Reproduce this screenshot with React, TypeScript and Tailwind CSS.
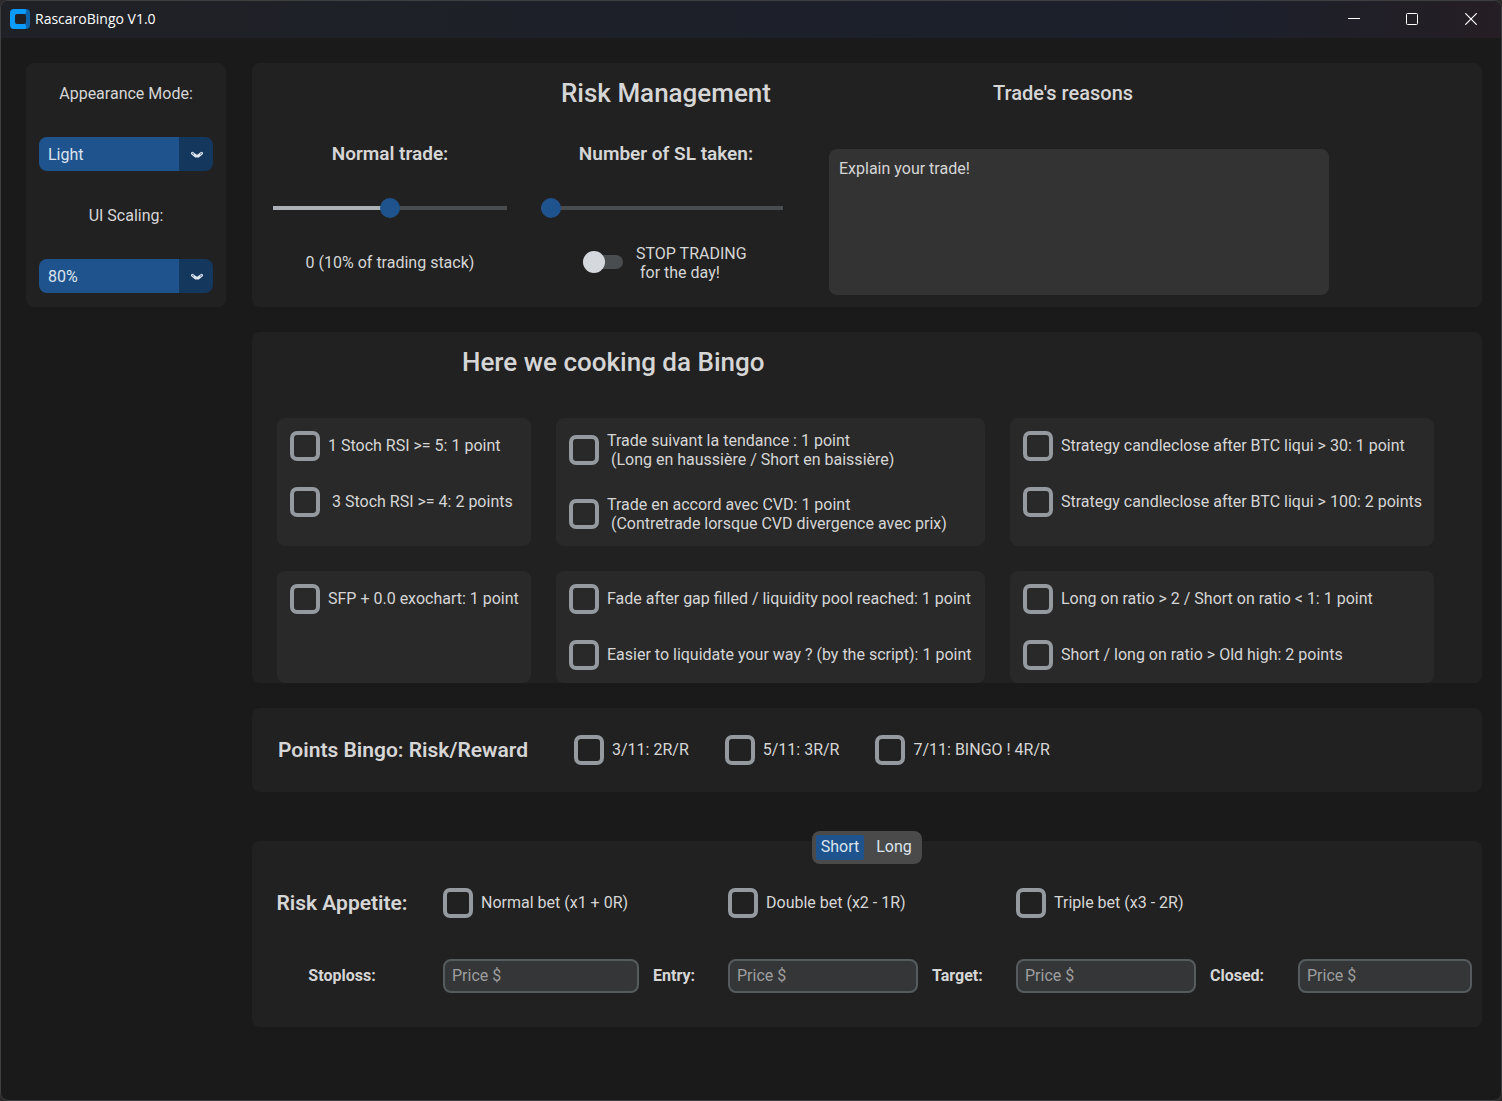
import { useState } from "react";

function Logo() {
  return (
    <svg width="20" height="20" viewBox="0 0 20 20" aria-hidden="true">
      <path d="M14 0h2a4 4 0 0 1 4 4v12a4 4 0 0 1-4 4h-2z" fill="#0a63ab" />
      <path
        d="M4 0H14.5a2 2 0 0 1 1.5 3.2L15 5H8v10h7l1 1.8a2 2 0 0 1-1.5 3.2H4a4 4 0 0 1-4-4V4a4 4 0 0 1 4-4z"
        fill="#0a9bff"
      />
      <rect x="5" y="5" width="11" height="10" rx="2" fill="#202126" />
    </svg>
  );
}

function TitleBar() {
  return (
    <header className="flex h-[37px] items-center justify-between bg-gradient-to-r from-[#202126] via-[#1b202c] via-80% to-[#251e24] pb-px">
      <div className="flex items-center gap-[5px] pl-[9px]">
        <Logo />
        <h1 className="font-['Open_Sans','Noto_Sans',sans-serif] text-[14px] leading-5 text-white">RascaroBingo V1.0</h1>
      </div>
      <div className="flex h-full text-white">
        <button type="button" aria-label="Minimize" className="grid w-[58px] place-items-center">
          <svg width="12" height="12" viewBox="0 0 12 12" fill="none" stroke="currentColor">
            <path d="M0 5.5h12" />
          </svg>
        </button>
        <button type="button" aria-label="Maximize" className="grid w-[58px] place-items-center">
          <svg width="12" height="12" viewBox="0 0 12 12" fill="none" stroke="currentColor">
            <rect x="0.5" y="0.5" width="11" height="11" rx="1" />
          </svg>
        </button>
        <button type="button" aria-label="Close" className="grid w-[60px] place-items-center">
          <svg width="12" height="12" viewBox="0 0 12 12" fill="none" stroke="currentColor" strokeWidth="1.2">
            <path d="M0.3 0.3l11.4 11.4M11.7 0.3L0.3 11.7" />
          </svg>
        </button>
      </div>
    </header>
  );
}

function OptionMenu({ id, label, options }: { id: string; label: string; options: string[] }) {
  return (
    <div>
      <label htmlFor={id} className="flex h-[60px] items-center justify-center pt-0.5">
        {label}
      </label>
      <div className="relative my-3.5 h-[34px]">
        <select
          id={id}
          className="h-full w-full appearance-none rounded-lg bg-linear-to-r from-[#1f538d] from-[calc(100%-34px)] to-[#14375e] to-[calc(100%-34px)] pt-0.5 pl-[9px] text-[#dce4ee]"
        >
          {options.map((o) => (
            <option key={o}>{o}</option>
          ))}
        </select>
        <svg
          className="pointer-events-none absolute top-[14px] right-[10px]"
          width="12"
          height="8"
          viewBox="0 0 12 8"
          fill="none"
          aria-hidden="true"
        >
          <path d="M1.5 2.3L4.8 5h2.4L10.5 2.3" stroke="#dce4ee" strokeWidth="3" strokeLinecap="round" strokeLinejoin="round" />
          <path d="M1.6 2.4l1 .7M10.4 2.4l-1 .7" stroke="#14375e" strokeWidth="0.8" strokeLinecap="round" />
        </svg>
      </div>
    </div>
  );
}

function Slider({ label, initial }: { label: string; initial: number }) {
  const [value, setValue] = useState(initial);
  return (
    <input
      type="range"
      aria-label={label}
      min={0}
      max={100}
      value={value}
      onChange={(e) => setValue(Number(e.target.value))}
      style={{ backgroundSize: `${value}% 4px, 100% 4px` }}
      className="block h-5 w-full appearance-none bg-[linear-gradient(#aab0b5,#aab0b5),linear-gradient(#4a4d50,#4a4d50)] bg-left bg-no-repeat [&::-webkit-slider-thumb]:size-5 [&::-webkit-slider-thumb]:appearance-none [&::-webkit-slider-thumb]:rounded-full [&::-webkit-slider-thumb]:bg-[#1f538d]"
    />
  );
}

function Check({ text }: { text: string }) {
  return (
    <label className="flex items-center gap-2 whitespace-pre leading-[19px]">
      <input
        type="checkbox"
        className="size-[30px] shrink-0 appearance-none rounded-[7px] border-4 border-[#949a9f] checked:border-[#1f538d] checked:bg-[#1f538d]"
      />
      <span className={text.includes("\n") ? "" : "pb-px"}>{text}</span>
    </label>
  );
}

function Card({ items }: { items: string[] }) {
  return (
    <div className="flex flex-col gap-[26px] rounded-lg bg-[#292929] p-[13px]">
      {items.map((t) => (
        <Check key={t} text={t} />
      ))}
    </div>
  );
}

const cards = [
  ["1 Stoch RSI >= 5: 1 point", " 3 Stoch RSI >= 4: 2 points"],
  [
    "Trade suivant la tendance : 1 point\n (Long en haussière / Short en baissière)",
    "Trade en accord avec CVD: 1 point\n (Contretrade lorsque CVD divergence avec prix)",
  ],
  ["Strategy candleclose after BTC liqui > 30: 1 point", "Strategy candleclose after BTC liqui > 100: 2 points"],
  ["SFP + 0.0 exochart: 1 point"],
  ["Fade after gap filled / liquidity pool reached: 1 point", "Easier to liquidate your way ? (by the script): 1 point"],
  ["Long on ratio > 2 / Short on ratio < 1: 1 point", "Short / long on ratio > Old high: 2 points"],
];

function RiskManagement() {
  return (
    <section className="grid grid-cols-[234px_250px_minmax(0,1fr)] grid-rows-[60px_60px_50px_58px] items-center gap-x-[34px] rounded-lg bg-[#212121] pb-4 pl-[21px]">
      <h2 className="col-start-2 text-center text-[26px] font-medium whitespace-nowrap">Risk Management</h2>
      <label htmlFor="reasons" className="pl-[168px] text-[20px] font-medium">
        Trade's reasons
      </label>
      <h3 className="pt-0.5 text-center text-[19px] font-semibold">Normal trade:</h3>
      <h3 className="pt-0.5 text-center text-[19px] font-semibold">Number of SL taken:</h3>
      <textarea
        id="reasons"
        defaultValue="Explain your trade!"
        className="row-span-3 ml-1 mt-[26px] h-[146px] w-full max-w-[500px] resize-none self-start rounded-lg bg-[#333333] px-2.5 py-2"
      />
      <Slider label="Normal trade" initial={50} />
      <div className="pr-2">
        <Slider label="Number of SL taken" initial={0} />
      </div>
      <p className="pt-0.5 text-center">0 (10% of trading stack)</p>
      <label className="flex items-center gap-[13px] pl-[42px] leading-[19px] whitespace-pre">
        <input
          type="checkbox"
          role="switch"
          className="flex h-3.5 w-10 appearance-none items-center rounded-full bg-[#4a4d50] before:size-[22px] before:shrink-0 before:rounded-full before:bg-[#d5d9de] checked:justify-end checked:bg-[#1f538d]"
        />
        <span className="pt-0.5">{"STOP TRADING\n for the day!"}</span>
      </label>
    </section>
  );
}

function Price({ id, label, first }: { id: string; label: string; first?: boolean }) {
  return (
    <>
      <label htmlFor={id} className={first ? "pr-4 text-center font-bold" : "pl-3.5 font-bold"}>
        {label}
      </label>
      <input
        id={id}
        type="text"
        placeholder="Price $"
        className="h-[34px] w-full min-w-0 rounded-lg border-2 border-[#565b5e] bg-[#343638] px-[7px] pb-0.5 placeholder:text-[#9e9e9e]"
      />
    </>
  );
}

function TradePanel() {
  const [side, setSide] = useState("Short");
  return (
    <div className="mt-[39px] flex flex-col">
      <div role="tablist" className="z-10 -mb-[23px] flex h-[33px] gap-1.5 self-center rounded-lg bg-[#4a4a4a] p-1">
        {["Short", "Long"].map((s) => (
          <button
            key={s}
            type="button"
            role="tab"
            aria-selected={side === s}
            onClick={() => setSide(s)}
            className="flex w-12 items-center justify-center rounded-xs pb-0.5 leading-[19px] text-[#dce4ee] aria-selected:bg-[#1f538d]"
          >
            {s}
          </button>
        ))}
      </div>
      <section className="grid grid-cols-[186px_minmax(0,196fr)_89px_minmax(0,190fr)_98px_minmax(0,180fr)_102px_minmax(0,174fr)] items-center gap-y-[41px] rounded-lg bg-[#212121] pt-[47px] pr-2.5 pb-[34px] pl-[5px]">
        <h2 className="h-[30px] pr-4 text-center text-[21px] leading-[30px] font-semibold">Risk Appetite:</h2>
        <div className="col-span-2">
          <Check text="Normal bet (x1 + 0R)" />
        </div>
        <div className="col-span-2">
          <Check text="Double bet (x2 - 1R)" />
        </div>
        <div className="col-span-3">
          <Check text="Triple bet (x3 - 2R)" />
        </div>
        <Price id="stoploss" label="Stoploss:" first />
        <Price id="entry" label="Entry:" />
        <Price id="target" label="Target:" />
        <Price id="closed" label="Closed:" />
      </section>
    </div>
  );
}

export default function App() {
  return (
    <div className="min-h-screen bg-[#2c2a2a] font-[Roboto,sans-serif] text-[16px] leading-6 text-[#d6d6d6]">
      <div className="flex min-h-screen flex-col overflow-hidden rounded-lg border border-[#3d3f40] bg-[#1a1a1a]">
        <TitleBar />
        <div className="flex items-start gap-[26px] pt-[25px] pr-[19px] pb-[25px] pl-[25px]">
          <aside className="w-[200px] shrink-0 rounded-lg bg-[#212121] px-[13px]">
            <OptionMenu id="appearance" label="Appearance Mode:" options={["Light", "Dark", "System"]} />
            <OptionMenu id="scaling" label="UI Scaling:" options={["80%", "90%", "100%", "110%", "120%"]} />
          </aside>
          <main className="flex min-w-0 flex-1 flex-col">
            <RiskManagement />
            <section className="mt-[25px] rounded-lg bg-[#212121] pr-12 pl-[25px]">
              <h2 className="pb-[26px] pl-[185px] text-[26px] leading-[60px] font-medium">Here we cooking da Bingo</h2>
              <div className="grid grid-cols-[minmax(0,254fr)_minmax(0,429fr)_minmax(0,424fr)] gap-[25px]">
                {cards.map((items) => (
                  <Card key={items[0]} items={items} />
                ))}
              </div>
            </section>
            <section className="mt-[25px] flex h-[84px] items-center gap-9 rounded-lg bg-[#212121] pl-[26px]">
              <h2 className="w-[260px] text-[21px] font-semibold whitespace-nowrap">Points Bingo: Risk/Reward</h2>
              <Check text="3/11: 2R/R" />
              <Check text="5/11: 3R/R" />
              <Check text="7/11: BINGO ! 4R/R" />
            </section>
            <TradePanel />
          </main>
        </div>
      </div>
    </div>
  );
}
